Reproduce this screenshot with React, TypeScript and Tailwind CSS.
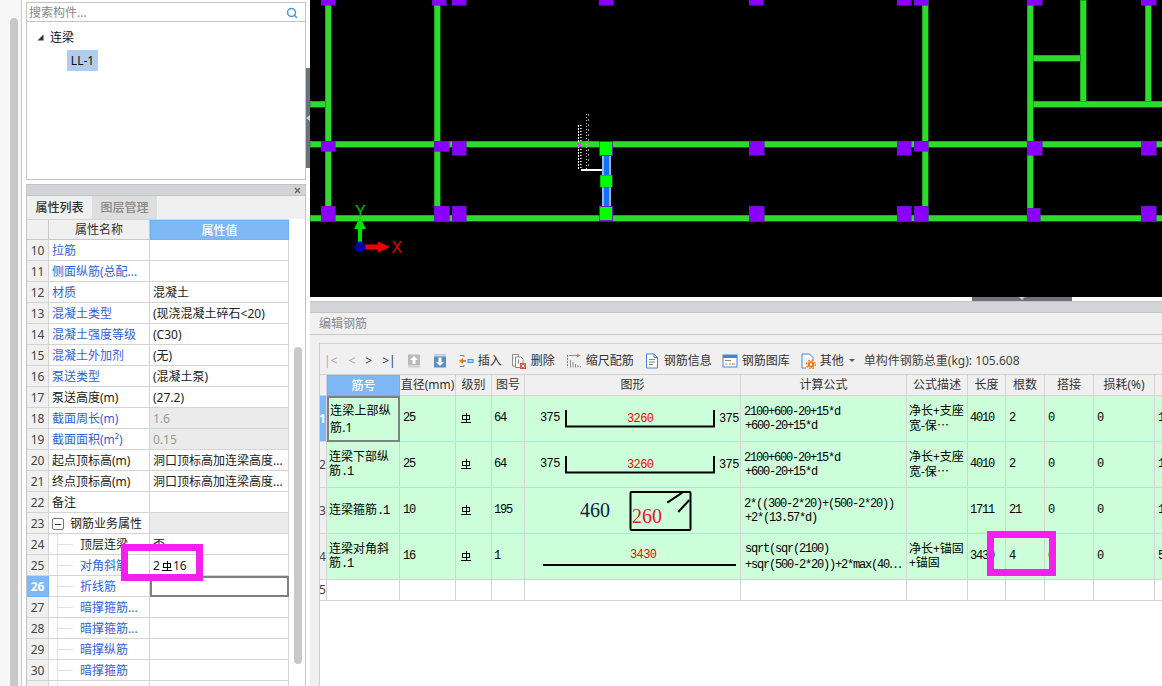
import React from "react";
import { Search } from "lucide-react";

const BLUE = "text-[#2f62dc]";

function Rebar({ className = "" }: { className?: string }) {
  return (
    <svg width="10" height="10" viewBox="0 0 10 10" className={className} fill="none" stroke="#000" strokeWidth="1" shapeRendering="crispEdges">
      <path d="M1.5 2.5h7v4h-7z" />
      <path d="M5 0v9" />
      <path d="M0 9.5h10" />
    </svg>
  );
}

type PropRow = { n: number; name: string; value?: React.ReactNode; blue?: boolean; grey?: boolean; child?: boolean; group?: boolean; current?: boolean };

const props: PropRow[] = [
  { n: 10, name: "拉筋", blue: true },
  { n: 11, name: "侧面纵筋(总配...", blue: true },
  { n: 12, name: "材质", value: "混凝土", blue: true },
  { n: 13, name: "混凝土类型", value: "(现浇混凝土碎石<20)", blue: true },
  { n: 14, name: "混凝土强度等级", value: "(C30)", blue: true },
  { n: 15, name: "混凝土外加剂", value: "(无)", blue: true },
  { n: 16, name: "泵送类型", value: "(混凝土泵)", blue: true },
  { n: 17, name: "泵送高度(m)", value: "(27.2)" },
  { n: 18, name: "截面周长(m)", value: "1.6", blue: true, grey: true },
  { n: 19, name: "截面面积(m²)", value: "0.15", blue: true, grey: true },
  { n: 20, name: "起点顶标高(m)", value: "洞口顶标高加连梁高度..." },
  { n: 21, name: "终点顶标高(m)", value: "洞口顶标高加连梁高度..." },
  { n: 22, name: "备注" },
  { n: 23, name: "钢筋业务属性", group: true },
  { n: 24, name: "顶层连梁", value: "否", child: true },
  {
    n: 25,
    name: "对角斜筋",
    blue: true,
    child: true,
    value: (
      <span className="flex items-center">
        2<Rebar className="ml-[2px] mr-[1px]" />
        16
      </span>
    ),
  },
  { n: 26, name: "折线筋", blue: true, child: true, current: true },
  { n: 27, name: "暗撑箍筋...", blue: true, child: true },
  { n: 28, name: "暗撑箍筋...", blue: true, child: true },
  { n: 29, name: "暗撑纵筋", blue: true, child: true },
  { n: 30, name: "暗撑箍筋", blue: true, child: true },
  { n: 31, name: "", child: true },
];

function PropertyRow({ r }: { r: PropRow }) {
  return (
    <div className="flex h-[21px] shrink-0 text-[12px] leading-[20px]">
      <div
        className={
          r.current
            ? "w-[22px] shrink-0 border-b border-r border-[#6fb1f5] bg-[#7eb8f7] pt-[1px] text-center font-bold text-white"
            : "w-[22px] shrink-0 border-b border-r border-[#d4d4d4] bg-[#f0f0f0] pt-[1px] text-center text-[#444]"
        }
      >
        {r.n === 31 ? "" : r.n}
      </div>
      <div
        className={
          "relative flex w-[101px] shrink-0 items-center overflow-hidden whitespace-nowrap border-b border-r border-[#d4d4d4] pt-[2px] " +
          (r.child ? "pl-[31px] " : "pl-[3px] ") +
          (r.blue ? BLUE : "text-[#222]")
        }
      >
        {r.group && (
          <span className="mr-[6px] flex h-[12px] w-[12px] shrink-0 items-center justify-center rounded-[2px] border border-[#777] text-[10px] leading-none text-[#333]">
            <span className="h-[1px] w-[6px] bg-[#333]" />
          </span>
        )}
        {r.child && (
          <>
            <span className="absolute left-[8px] top-0 h-[21px] w-[1px] bg-[#e2e2e2]" />
            <span className="absolute left-[9px] top-[10px] h-[1px] w-[15px] bg-[#e2e2e2]" />
          </>
        )}
        {r.name}
      </div>
      <div
        className={
          (r.current
            ? "border-2 border-[#808080] "
            : "border-b border-r border-[#d4d4d4] pt-[2px] ") +
          (r.grey || r.group ? "bg-[#ebebeb] " : "") +
          (r.grey ? "text-[#999] " : "text-[#222] ") +
          "flex w-[139px] shrink-0 items-center whitespace-nowrap pl-[3px]"
        }
      >
        {r.value}
      </div>
    </div>
  );
}

function Canvas() {
  const G = "#2bdc2b";
  const P = "#8a00ff";
  const squares: [number, number, number, number][] = [
    [321, -5, 14, 10], [432, -5, 14, 10], [452, -5, 14, 10], [599, -5, 14, 10], [749, -5, 14, 10], [897, -5, 14, 10], [914, -5, 14, 10], [1027, -5, 15, 10], [1141, -5, 15, 10],
    [321, 141, 14, 10], [434, 141, 15, 10], [452, 141, 14, 14], [749, 141, 15, 14], [897, 141, 14, 14], [914, 141, 14, 10], [1027, 141, 15, 14], [1141, 141, 15, 14],
    [321, 206, 14, 15], [434, 206, 15, 15], [452, 206, 14, 15], [749, 206, 15, 15], [897, 206, 14, 15], [914, 206, 14, 15], [1027, 208, 13, 13], [1141, 206, 15, 15],
  ];
  return (
    <svg width="852" height="297" viewBox="310 0 852 297" className="block h-[297px] w-[852px] bg-black" shapeRendering="crispEdges">
      <g fill={G} stroke="#168a16" strokeWidth="0.6">
        <rect x="325" y="0" width="6" height="218" />
        <rect x="434" y="0" width="6" height="218" />
        <rect x="922" y="0" width="6" height="218" />
        <rect x="1027" y="0" width="6" height="218" />
        <rect x="1080" y="0" width="6" height="104" />
        <rect x="1145" y="0" width="6" height="104" />
        <rect x="310" y="101" width="15" height="6" />
        <rect x="1033" y="55" width="47" height="6" />
        <rect x="1033" y="101" width="129" height="6" />
        <rect x="310" y="141" width="852" height="6" />
        <rect x="310" y="215" width="852" height="6" />
      </g>
      <g fill={P} stroke="#5c1fa8" strokeWidth="0.6">
        {squares.map(([x, y, w, h], i) => (
          <rect key={i} x={x} y={y} width={w} height={h} />
        ))}
      </g>
      <rect x="602" y="155" width="9" height="52" fill="#8ab8ff" />
      <rect x="604" y="155" width="5" height="52" fill="#1670f5" />
      {[[599, 141], [599, 206]].map(([x, y]) => (
        <rect key={y} x={x + 0.5} y={y + 0.5} width="13" height="14" fill="#00ff00" stroke="#6a1fc0" />
      ))}
      <rect x="600" y="175" width="12" height="12" fill="#00ff00" stroke="#0a8a0a" strokeWidth="0.5" />
      <rect x="581" y="169" width="21" height="2" fill="#fff" />
      <path d="M578.5 125V170" stroke="#fff" strokeDasharray="2 1" />
      <path d="M580 125V170" stroke="#ddd" strokeDasharray="1 2" />
      <path d="M581.5 125V168" stroke="#999" strokeDasharray="1 2" />
      <path d="M586.5 114V170" stroke="#ccc" strokeDasharray="1 2" />
      <path d="M588 114V168" stroke="#999" strokeDasharray="2 3" />
      <rect x="578" y="143" width="3" height="4" fill="#e040e0" />
      <g shapeRendering="auto">
        <rect x="358" y="226" width="4" height="20" fill="#00e000" />
        <polygon points="360,217 366,229 354,229" fill="#00e000" />
        <rect x="362" y="244.5" width="17" height="5" fill="#f00000" />
        <polygon points="390,247 378,241.5 378,252.5" fill="#f00000" />
        <circle cx="360" cy="247" r="5.5" fill="#0000a8" />
        <text x="355" y="217" fontSize="16" fill="#00c000" fontFamily="'Liberation Sans',sans-serif">Y</text>
        <text x="391.5" y="253" fontSize="16" fill="#e00000" fontFamily="'Liberation Sans',sans-serif">X</text>
      </g>
    </svg>
  );
}

const I = ({ children }: { children: React.ReactNode }) => (
  <svg width="16" height="16" viewBox="0 0 16 16" fill="none" className="shrink-0">
    {children}
  </svg>
);

const ToolIcons = {
  up: (
    <I>
      <rect x="2" y="1.5" width="12" height="11" fill="#b9b9b9" />
      <rect x="2" y="13" width="12" height="1.5" fill="#cfcfcf" />
      <path d="M8 3L12 7H9.5V11H6.5V7H4Z" fill="#fff" />
    </I>
  ),
  down: (
    <I>
      <rect x="2" y="1.5" width="12" height="13" fill="#5b8fc7" />
      <rect x="2" y="1.5" width="12" height="2" fill="#c8d8ea" />
      <path d="M8 13L12 9H9.5V4.5H6.5V9H4Z" fill="#fff" />
    </I>
  ),
  insert: (
    <I>
      <path d="M2 2.5H6M6 2.5V4M6 12V13.5H2" stroke="#7f7f7f" />
      <path d="M1 8L5 5V7H8V9H5V11Z" fill="#ee7a16" />
      <rect x="10" y="6.5" width="5" height="3" fill="#bcd7f3" stroke="#4a90d9" />
    </I>
  ),
  del: (
    <I>
      <path d="M1.5 1.5H7.5V13H1.5Z" fill="#fff" stroke="#8a8a8a" />
      <path d="M4.5 4H10L12 6V10M4.5 4V14.5H9" fill="#fff" stroke="#8a8a8a" />
      <rect x="9" y="10" width="6" height="6" fill="#e0523f" />
      <path d="M10.5 11.5L13.5 14.5M13.5 11.5L10.5 14.5" stroke="#fff" />
    </I>
  ),
  scale: (
    <I>
      <path d="M1.5 2V14.5" stroke="#4a90d9" strokeDasharray="2 1" />
      <path d="M3 2.5H12" stroke="#ee7a16" />
      <path d="M15 2.5L11 0.8V4.2Z" fill="#ee7a16" />
      <path d="M4.5 7V14.5M7 9V14.5M9.5 11V14.5M12 12V14.5M14.5 13V14.5" stroke="#8c8c8c" />
    </I>
  ),
  info: (
    <I>
      <path d="M2.5 1H10L13.5 4.5V15H2.5Z" fill="#fff" stroke="#3f86d6" />
      <path d="M10 1V4.5H13.5" stroke="#3f86d6" />
      <path d="M5 6.5H11M5 9H11M5 11.5H9" stroke="#8a8a8a" />
    </I>
  ),
  lib: (
    <I>
      <rect x="1" y="2" width="14" height="12" fill="#fff" stroke="#3f86d6" />
      <rect x="1" y="2" width="14" height="3" fill="#3f86d6" />
      <path d="M3 7.5H9" stroke="#8a8a8a" />
      <path d="M3 11H6" stroke="#e8a33d" />
      <path d="M7 11H9" stroke="#6db35a" />
      <path d="M10 11H13" stroke="#d9605a" />
    </I>
  ),
  other: (
    <I>
      <path d="M2 1H9.5L13 4.5V8M2 1V15H6" fill="#fff" stroke="#3f86d6" />
      <circle cx="11" cy="11.5" r="3.2" fill="#ee7a16" />
      <circle cx="11" cy="11.5" r="4.3" stroke="#ee7a16" strokeDasharray="1.6 1.8" strokeWidth="1.4" />
      <circle cx="11" cy="11.5" r="1.2" fill="#fff" />
    </I>
  ),
};

function Tool({ icon, label, className }: { icon: React.ReactNode; label: string; className: string }) {
  return (
    <div className={"flex items-center gap-[4px] whitespace-nowrap text-[#333] " + className}>
      {icon}
      <span>{label}</span>
    </div>
  );
}

const cols = ["w-[8px]", "w-[73px]", "w-[56px]", "w-[36px]", "w-[33px]", "w-[216px]", "w-[166px]", "w-[61px]", "w-[38px]", "w-[39px]", "w-[49px]", "w-[61px]", "w-[60px]"];
const headers = ["", "筋号", "直径(mm)", "级别", "图号", "图形", "计算公式", "公式描述", "长度", "根数", "搭接", "损耗(%)", ""];
const cellBase = "flex shrink-0 items-center overflow-hidden ";
const cell = cellBase + "border-b border-r border-[#d4d4d4] ";
const MONO = "font-['Liberation_Mono','Noto_Sans_CJK_SC',monospace] text-[12px] tracking-[-1.2px] text-black";

const shapeText = { fontFamily: "'Liberation Mono',monospace", fontSize: 12, letterSpacing: -0.6 };
const serifText = { fontFamily: "'Liberation Serif',serif", fontSize: 20 };

function BarShape({ top }: { top: number }) {
  return (
    <svg width="215" height="45" className="block">
      <text x="15" y={top + 11} fill="#000" {...shapeText}>375</text>
      <path d={`M41 ${top}V${top + 16.5}H189V${top}`} stroke="#000" strokeWidth="2" fill="none" />
      <text x="102" y={top + 12} fill="#f00" {...shapeText}>3260</text>
      <text x="194" y={top + 12} fill="#000" {...shapeText}>375</text>
    </svg>
  );
}

function StirrupShape() {
  return (
    <svg width="215" height="45" className="block">
      <text x="55" y="28.7" fill="#102040" {...serifText}>460</text>
      <rect x="105.5" y="4" width="60" height="38" rx="1" stroke="#000" strokeWidth="2" fill="none" />
      <text x="107" y="34.7" fill="#f01030" {...serifText}>260</text>
      <path d="M142.3 14.7L157.3 4.7M153.3 24L164.3 12" stroke="#000" strokeWidth="2" />
    </svg>
  );
}

function LineShape() {
  return (
    <svg width="215" height="45" className="block">
      <text x="105" y="24" fill="#f00" {...shapeText}>3430</text>
      <rect x="18" y="30" width="193" height="2" fill="#000" />
    </svg>
  );
}

const Dots = () => <span className="font-['Noto_Sans_CJK_SC',sans-serif] tracking-normal">⋯</span>;

type BarRow = { h: string; name: React.ReactNode; first?: boolean; d: string; no: string; shape: React.ReactNode; f: React.ReactNode; desc: React.ReactNode; len: string; count: string; a: string; b: string; last: string };

const sm = "font-['Liberation_Mono',monospace] text-[12px] tracking-[-1.2px]";

const bars: BarRow[] = [
  {
    h: "1",
    first: true,
    name: "连梁上部纵筋.1",
    d: "25", no: "64", shape: <BarShape top={14} />,
    f: <>2100+600-20+15*d<br /><span className="ml-[1px]">+600-20+15*d</span></>,
    desc: <>净长+支座<br />宽-保<Dots /></>, len: "4010", count: "2", a: "0", b: "0", last: "1",
  },
  {
    h: "2",
    name: <>连梁下部纵<br />筋<span className={sm}>.1</span></>,
    d: "25", no: "64", shape: <BarShape top={14} />,
    f: <>2100+600-20+15*d<br /><span className="ml-[1px]">+600-20+15*d</span></>,
    desc: <>净长+支座<br />宽-保<Dots /></>, len: "4010", count: "2", a: "0", b: "0", last: "1",
  },
  {
    h: "3",
    name: <>连梁箍筋<span className={sm}>.1</span></>,
    d: "10", no: "195", shape: <StirrupShape />,
    f: <>2*((300-2*20)+(500-2*20))<br /><span className="ml-[1px]">+2*(13.57*d)</span></>,
    desc: "", len: "1711", count: "21", a: "0", b: "0", last: "1",
  },
  {
    h: "4",
    name: <>连梁对角斜<br />筋<span className={sm}>.1</span></>,
    d: "16", no: "1", shape: <LineShape />,
    f: <><span className="ml-[1px]">sqrt(sqr(2100)</span><br /><span className="ml-[1px]">+sqr(500-2*20))+2*max(40<Dots /></span></>,
    desc: <>净长+锚固<br />+锚固</>, len: "3430", count: "4", a: "0", b: "0", last: "5",
  },
];

function BarTableRow({ r }: { r: BarRow }) {
  return (
    <div className="flex h-[46px] w-[900px] shrink-0 bg-[#ccffd9] text-[12px] text-black">
      <div className={cell + cols[0] + (r.h === "1" ? " justify-center bg-[#7eb8f7] font-bold text-white" : " justify-center bg-[#f0f0f0] text-[#444]")}>{r.h}</div>
      <div
        className={
          cols[1] + " " +
          (r.first
            ? cellBase + "border-2 border-[#808080] pl-[1px] leading-[17px] tracking-[0.2px]"
            : cell + "pb-[1px] pl-[2px] leading-[14px]")
        }
      >
        <div>{r.name}</div>
      </div>
      <div className={cell + cols[2] + " pl-[3px] pb-[2px] " + MONO}>{r.d}</div>
      <div className={cell + cols[3] + " pl-[5px] pb-[1px]"}>
        <Rebar />
      </div>
      <div className={cell + cols[4] + " pl-[2px] pb-[2px] " + MONO}>{r.no}</div>
      <div className={cell + cols[5]}>{r.shape}</div>
      <div className={cell + cols[6] + " whitespace-nowrap pl-[3px] leading-[14px] " + MONO}>
        <div>{r.f}</div>
      </div>
      <div className={cell + cols[7] + " pb-[1px] pl-[2px] pr-[1px] leading-[14px]"}>
        <div>{r.desc}</div>
      </div>
      <div className={cell + cols[8] + " pl-[2px] pb-[2px] " + MONO}>{r.len}</div>
      <div className={cell + cols[9] + " pl-[3px] pb-[2px] " + MONO}>{r.count}</div>
      <div className={cell + cols[10] + " pl-[3px] pb-[2px] " + MONO}>{r.a}</div>
      <div className={cell + cols[11] + " pl-[3px] pb-[2px] " + MONO}>{r.b}</div>
      <div className={cell + cols[12] + " pl-[3px] pb-[2px] " + MONO}>{r.last}</div>
    </div>
  );
}

export default function App() {
  return (
    <div className="relative flex h-[686px] w-[1162px] overflow-hidden bg-white font-['Noto_Sans','Noto_Sans_CJK_SC',sans-serif] text-[12px]">
      {/* left scroller strip */}
      <div className="flex h-full w-[22px] shrink-0 flex-col border-r border-[#c8c8c8] bg-[#f6f6f6] pl-[10px] pt-[18px]">
        <div className="w-[8px] flex-1 rounded-t-[4px] bg-[#c8c8c8]" />
      </div>
      <div className="w-[4px] shrink-0 bg-white" />

      {/* component + property panels */}
      <div className="flex h-full w-[280px] shrink-0 flex-col">
        <div className="mt-[2px] flex h-[20px] shrink-0 items-center justify-between border-x border-y border-[#c4c4c4] pl-[2px] pr-[7px] pt-[1px] text-[#888]">
          <span>搜索构件...</span>
          <Search size={12} strokeWidth={3} className="text-[#3f9ad6]" />
        </div>
        <div className="flex h-[158px] shrink-0 flex-col border-x border-b border-[#c4c4c4] bg-white">
          <div className="flex h-[28px] items-center pl-[10px] pt-[3px] text-[#111]">
            <svg width="7" height="7" viewBox="0 0 7 7" className="mr-[6px]">
              <polygon points="6.5,0.5 6.5,6.5 0.5,6.5" fill="#333" />
            </svg>
            连梁
          </div>
          <div className="ml-[40px] flex h-[21px] w-[31px] items-center justify-center bg-[#b0cdef] text-[#111]">LL-1</div>
        </div>
        <div className="h-[4px] shrink-0 bg-white" />
        <div className="flex min-h-0 flex-1 flex-col border-x border-[#c4c4c4]">
          <div className="flex h-[12px] shrink-0 items-center justify-end border-y border-[#c4c4c4] bg-[#d3d4d8] pr-[4px] text-[#666]">
            <svg width="7" height="7" viewBox="0 0 7 7" stroke="#666" strokeWidth="1.4">
              <path d="M1 1L6 6M6 1L1 6" />
            </svg>
          </div>
          <div className="flex h-[23px] shrink-0 bg-[#f0f0f0] font-medium">
            <div className="flex w-[65px] items-center justify-center text-[#333]">属性列表</div>
            <div className="flex w-[65px] items-center justify-center bg-[#dedede] text-[#888]">图层管理</div>
          </div>
          <div className="flex min-h-0 flex-1">
            <div className="flex w-[262px] shrink-0 flex-col overflow-hidden">
              <div className="flex h-[21px] shrink-0 border-t border-[#d4d4d4] bg-[#f0f0f0] leading-[19px]">
                <div className="w-[22px] shrink-0 border-b border-r border-[#c8c8c8]" />
                <div className="w-[101px] shrink-0 border-b border-r border-[#c8c8c8] text-center text-[#333]">属性名称</div>
                <div className="w-[139px] shrink-0 border border-[#6fb1f5] bg-[#7eb8f7] text-center font-medium text-white">属性值</div>
              </div>
              {props.map((r) => (
                <PropertyRow key={r.n} r={r} />
              ))}
            </div>
            <div className="ml-[5px] w-[8px] shrink-0 pt-[128px]">
              <div className="h-[317px] w-[8px] rounded-[4px] bg-[#c8c8c8]" />
            </div>
          </div>
        </div>
      </div>

      {/* vertical splitter */}
      <div className="w-[4px] shrink-0 pt-[68px]">
        <div className="flex h-[100px] w-[4px] items-center bg-[#6a737b]">
          <svg width="4" height="6" viewBox="0 0 4 6">
            <polygon points="0,3 4,0 4,6" fill="#c8ccd0" />
          </svg>
        </div>
      </div>

      {/* right side */}
      <div className="flex h-full min-w-0 flex-1 flex-col">
        <Canvas />
        <div className="h-[4px] shrink-0 bg-white pl-[662px]">
          <div className="flex h-[4px] w-[100px] justify-center bg-[#6a737b]">
            <svg width="6" height="3" viewBox="0 0 6 3">
              <polygon points="0,0 6,0 3,3" fill="#c8ccd0" />
            </svg>
          </div>
        </div>
        <div className="h-[12px] shrink-0 border-y border-[#c4c4c8] bg-[#d3d4d8]" />
        <div className="flex h-[22px] shrink-0 items-center border-b border-[#c8c8c8] bg-[#f0f0f0] pl-[9px] text-[#888]">编辑钢筋</div>
        <div className="flex min-h-0 flex-1 flex-col bg-[#f0f0f0] pl-[9px] pt-[8px]">
          <div className="flex h-[32px] w-[843px] shrink-0 items-center overflow-hidden whitespace-nowrap border-y border-l border-[#d0d0d0] bg-[#f0f0f0] pt-[3px]">
            <span className="ml-[4px] text-[#aaa]">|&lt;</span>
            <span className="ml-[11px] text-[#aaa]">&lt;</span>
            <span className="ml-[10px] text-[#333]">&gt;</span>
            <span className="ml-[10px] text-[#333]">&gt;|</span>
            <span className="ml-[10px] flex">{ToolIcons.up}</span>
            <span className="ml-[10px] flex">{ToolIcons.down}</span>
            <Tool className="ml-[10px]" icon={ToolIcons.insert} label="插入" />
            <Tool className="ml-[9px]" icon={ToolIcons.del} label="删除" />
            <Tool className="ml-[11px]" icon={ToolIcons.scale} label="缩尺配筋" />
            <Tool className="ml-[10px]" icon={ToolIcons.info} label="钢筋信息" />
            <Tool className="ml-[10px]" icon={ToolIcons.lib} label="钢筋图库" />
            <Tool className="ml-[10px]" icon={ToolIcons.other} label="其他" />
            <svg width="6" height="4" viewBox="0 0 6 4" className="ml-[5px]">
              <polygon points="0,0 6,0 3,3" fill="#555" />
            </svg>
            <span className="ml-[9px] text-[#444]">单构件钢筋总重(kg):&nbsp;105.608</span>
          </div>
          <div className="flex min-h-0 flex-1 flex-col overflow-hidden border-l border-[#d0d0d0] bg-white">
            <div className="-ml-[1px] flex h-[21px] w-[900px] shrink-0 bg-[#f0f0f0] text-[#333]">
              {headers.map((h, i) => (
                <div
                  key={i}
                  className={
                    cols[i] +
                    " justify-center whitespace-nowrap " +
                    (i === 1
                      ? cellBase + "border border-[#6fb1f5] bg-[#7eb8f7] font-medium text-white"
                      : cell)
                  }
                >
                  {h}
                </div>
              ))}
            </div>
            <div className="-ml-[1px] flex flex-col">
              {bars.map((r) => (
                <BarTableRow key={r.h} r={r} />
              ))}
              <div className="flex h-[21px] w-[900px] shrink-0 bg-white">
                {cols.map((c, i) => (
                  <div key={i} className={cell + c + (i === 0 ? " justify-center text-[#444]" : "")}>
                    {i === 0 ? "5" : ""}
                  </div>
                ))}
              </div>
            </div>
          </div>
        </div>
      </div>

      {/* annotation boxes drawn over the screenshot */}
      <div className="absolute left-[121px] top-[544px] h-[37px] w-[82px] border-[7px] border-[#f51ff0]" />
      <div className="absolute left-[987px] top-[531px] h-[45px] w-[69px] border-[7px] border-[#f51ff0]" />
    </div>
  );
}
